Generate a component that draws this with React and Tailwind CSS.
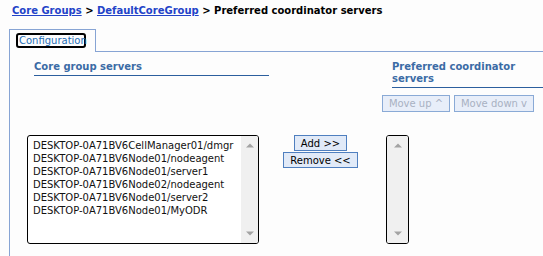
import React from 'react'

const servers = [
   'DESKTOP-0A71BV6CellManager01/dmgr',
   'DESKTOP-0A71BV6Node01/nodeagent',
   'DESKTOP-0A71BV6Node01/server1',
   'DESKTOP-0A71BV6Node02/nodeagent',
   'DESKTOP-0A71BV6Node01/server2',
   'DESKTOP-0A71BV6Node01/MyODR',
]

const UpArrow = () => (
   <svg width="8" height="5" viewBox="0 0 8 5">
      <path d="M0 4.5 L4 0.5 L8 4.5 Z" fill="#a3a3a3" />
   </svg>
)

const DownArrow = () => (
   <svg width="8" height="5" viewBox="0 0 8 5">
      <path d="M0 0.5 L4 4.5 L8 0.5 Z" fill="#a3a3a3" />
   </svg>
)

const ScrollTrack = ({ className }) => (
   <div className={`flex flex-col items-center justify-between bg-[#f0f0f0] pt-[7px] pb-[7px] ${className}`}>
      <UpArrow />
      <DownArrow />
   </div>
)

const App = () => {
   return (
      <div
         className="w-[543px] h-[256px] overflow-hidden bg-[#fdfdfd] text-[10px] text-black"
         style={{ fontFamily: '"DejaVu Sans", Verdana, sans-serif' }}
      >
         {/* breadcrumb */}
         <div className="pl-[12px] pt-[4px] leading-[13px] font-bold whitespace-nowrap">
            <a href="#" className="text-[#2343c8] underline">Core Groups</a>
            {' > '}
            <a href="#" className="text-[#2343c8] underline">DefaultCoreGroup</a>
            {' > Preferred coordinator servers'}
         </div>

         {/* tabs */}
         <div className="flex mt-[12px] pl-[9px]">
            <div className="w-[87px] h-[23px] border border-b-0 border-[#87a4d4] pt-[3px] pl-[6px]">
               <span className="inline-block h-[15px] w-[70px] border-2 border-black rounded-[3px] leading-[11px] pl-[1px] text-[#1f6db5]">
                  Configuration
               </span>
            </div>
            <div className="flex-1 border-b border-[#87a4d4]" />
         </div>

         {/* panel */}
         <div className="ml-[9px] h-[205px] border-l border-[#87a4d4]">
            <div className="flex items-start pt-[9px] font-bold text-[#3b6ba5] leading-[12px]">
               <div className="ml-[24px] w-[235px] pb-[2px] border-b border-[#2c5f9e]">Core group servers</div>
               <div className="ml-[123px] w-[151px] pb-[2px] border-b border-[#2c5f9e]">Preferred coordinator servers</div>
            </div>

            <div className="flex gap-[4px] ml-[372px] mt-[7px]">
               <button className="w-[68px] h-[17px] border border-[#8aaad6] bg-[#e8eef9] text-[#a9b1c2] leading-[14px]">
                  Move up ^
               </button>
               <button className="w-[80px] h-[17px] border border-[#8aaad6] bg-[#e8eef9] text-[#a9b1c2] leading-[14px]">
                  Move down v
               </button>
            </div>

            <div className="flex items-start ml-[17px] mt-[23px]">
               <div className="flex w-[232px] h-[109px] border border-black rounded-[3px] overflow-hidden bg-white">
                  <div className="flex-1 pl-[5px] pt-[3px] leading-[13px] text-[#111]">
                     {servers.map((s) => (
                        <div key={s} className="whitespace-nowrap">{s}</div>
                     ))}
                  </div>
                  <ScrollTrack className="w-[17px]" />
               </div>

               <div className="flex flex-col items-center gap-[1px] ml-[24px] w-[75px]">
                  <button className="w-[53px] h-[16px] border border-[#4f7fbf] bg-[#e1eaf8] leading-[13px]">
                     Add &gt;&gt;
                  </button>
                  <button className="w-[75px] h-[16px] border border-[#4f7fbf] bg-[#e1eaf8] leading-[13px]">
                     Remove &lt;&lt;
                  </button>
               </div>

               <div className="flex ml-[28px] w-[23px] h-[109px] border border-black rounded-[3px] overflow-hidden">
                  <ScrollTrack className="flex-1" />
               </div>
            </div>
         </div>
      </div>
   )
}

export default App
